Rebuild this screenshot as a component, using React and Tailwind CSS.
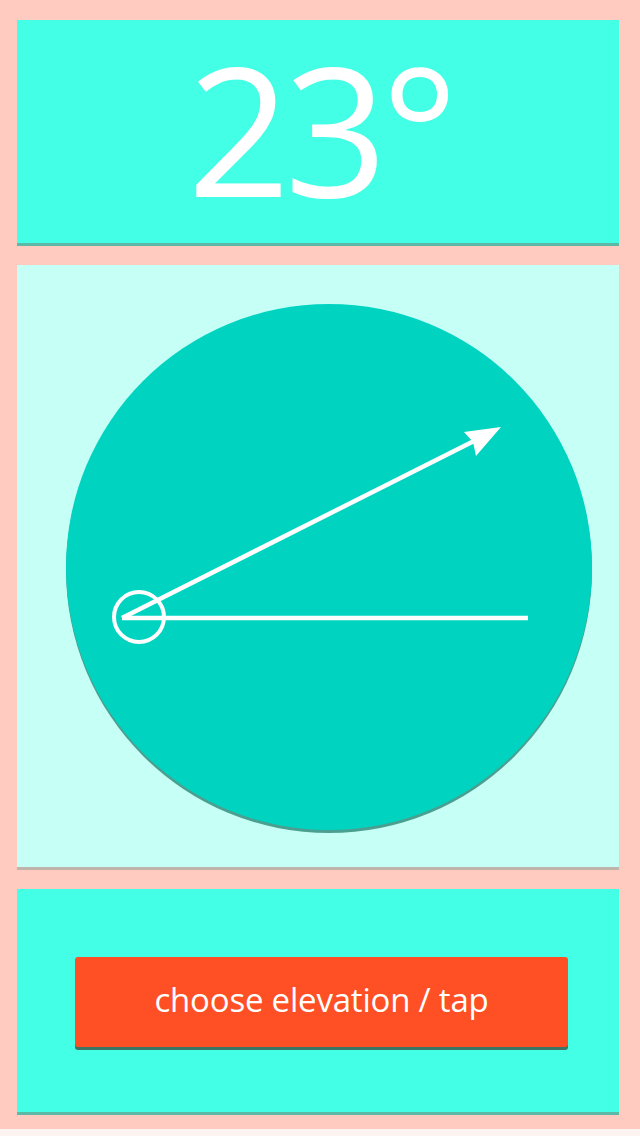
import React from 'react';

const Dial = () => (
  <div className="relative w-[526px] h-[526px] rounded-full bg-[#00d4c0] shadow-[0_3px_0_#4b9f90]">
    {/* angle indicator drawn over the dial; coords are relative to dial box (left 66, top 304) */}
    <svg className="absolute inset-0" width="526" height="526" viewBox="0 0 526 526">
      <line x1="56" y1="314" x2="462" y2="314" stroke="#fff" strokeWidth="4.5" />
      <line x1="56" y1="314" x2="414" y2="134" stroke="#fff" strokeWidth="4.5" />
      <polygon points="435,123 398,128 407,138 410,152" fill="#fff" />
      <circle cx="73" cy="313" r="25" fill="none" stroke="#fff" strokeWidth="4" />
    </svg>
  </div>
);

const App = () => {
  return (
    <div className="w-[640px] h-[1136px] bg-[#ffcbc0] flex flex-col" style={{ fontFamily: '"Open Sans", "Liberation Sans", sans-serif' }}>
      <div className="w-[602px] ml-[17px] flex flex-col gap-[22px] pt-5">
        {/* reading */}
        <div className="h-[223px] bg-[#43ffe5] shadow-[0_3px_0_#5cb9a6] flex items-center justify-center">
          <span className="text-white text-[180px] leading-[1.2] tracking-[-6px] pl-1 pb-2">23°</span>
        </div>

        {/* dial */}
        <div className="h-[602px] bg-[#c6fff6] shadow-[0_3px_0_#bfb3aa] flex pl-[49px] pt-[39px]">
          <Dial />
        </div>

        {/* action */}
        <div className="h-[223px] bg-[#43ffe5] shadow-[0_3px_0_#5cb9a6] flex items-center pl-[58px] pt-[2px]">
          <button className="w-[493px] h-[90px] rounded-[3px] bg-[#ff4f24] shadow-[0_3px_0_#3b7564] text-white text-[33px] tracking-[-0.2px] flex items-center justify-center pb-1">
            choose elevation / tap
          </button>
        </div>
      </div>
      <div className="mt-auto h-[7px] bg-[#fdf4f2]" />
    </div>
  );
};

export default App;
